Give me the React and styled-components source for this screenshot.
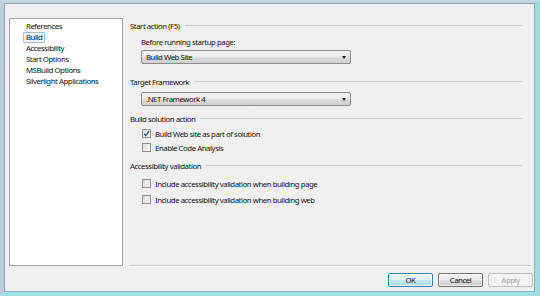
import React from 'react';
import styled, { createGlobalStyle } from 'styled-components';

const GlobalStyle = createGlobalStyle`
  html, body {
    margin: 0;
    padding: 0;
    background: #f0f0f0;
  }
  body {
    font-family: "Noto Sans", "Liberation Sans", sans-serif;
    font-size: 7.8px;
    letter-spacing: -0.45px;
    color: #141414;
  }
`;

const Window = styled.div`
  box-sizing: border-box;
  width: 540px;
  height: 296px;
  display: flex;
  flex-direction: column;
  padding: 15px 5px 5px 5px;
  background: #f0f0f0;
  border-top: 3px solid #c6d6e0;
  border-left: 4px solid #bccfdb;
  border-right: 5px solid #9ddcdd;
  border-bottom: 4px solid #9fe1e2;
  box-shadow: inset 1px 1px 0 #8fa3b0, inset -1px -1px 0 #7fb9bd;
`;

const Body = styled.div`
  display: flex;
  height: 248px;
`;

const PageList = styled.ul`
  box-sizing: border-box;
  width: 114px;
  margin: 0;
  padding: 2px 0 0 0;
  list-style: none;
  background: #fff;
  border: 1px solid #a0a4aa;
`;

const PageItem = styled.li`
  height: 11px;
  line-height: 11px;
  padding-left: 15px;
  span {
    display: inline-block;
    padding: 0 2px;
    margin-left: -2px;
    line-height: 9px;
    border: 1px solid ${p => (p.$selected ? '#a9bbd1' : 'transparent')};
    background: ${p => (p.$selected ? '#edf2f8' : 'transparent')};
    border-radius: 1px;
  }
`;

const RightPane = styled.div`
  flex: 1;
  display: flex;
  flex-direction: column;
  margin-left: 6px;
`;

const Content = styled.div`
  flex: 1;
  display: flex;
  flex-direction: column;
  padding: 2px 8px 0 1px;
`;

const Separator = styled.div`
  height: 1px;
  background: #c4c4c4;
  box-shadow: 0 1px 0 #fff;
`;

const Heading = styled.div`
  display: flex;
  align-items: center;
  height: 11px;
  margin-top: ${p => p.$top || 0}px;
  white-space: nowrap;
  &::after {
    content: '';
    flex: 1;
    height: 1px;
    margin-left: 5px;
    background: #c9c9c9;
  }
`;

const Label = styled.div`
  height: 11px;
  line-height: 11px;
  margin: ${p => p.$top || 0}px 0 0 11px;
`;

const Select = styled.div`
  box-sizing: border-box;
  width: 210px;
  height: 14px;
  margin: ${p => p.$top || 0}px 0 0 11px;
  display: flex;
  align-items: center;
  justify-content: space-between;
  padding: 0 4px 0 4px;
  border: 1px solid #8b8b8b;
  border-radius: 2px;
  background: linear-gradient(#f3f3f3, #ebebeb 50%, #dedede 50%, #d0d0d0);
  &::after {
    content: '';
    border-left: 2.5px solid transparent;
    border-right: 2.5px solid transparent;
    border-top: 3px solid #111;
  }
`;

const CheckRow = styled.label`
  display: flex;
  align-items: center;
  height: 11px;
  margin: ${p => p.$top || 0}px 0 0 12px;
`;

const Box = styled.span`
  box-sizing: border-box;
  width: 9px;
  height: 9px;
  margin-right: 4px;
  border: 1px solid #8e8f8f;
  background: linear-gradient(135deg, #dcdcdc, #f6f6f6);
  display: flex;
  align-items: center;
  justify-content: center;
`;

const Footer = styled.div`
  display: flex;
  justify-content: flex-end;
  gap: 5px;
  margin: 7px -3px 0 0;
`;

const Button = styled.button`
  box-sizing: border-box;
  width: 45px;
  height: 14px;
  padding: 0;
  font: inherit;
  letter-spacing: inherit;
  border-radius: 2px;
  border: 1px solid ${p => (p.$primary ? '#3c7fb1' : p.disabled ? '#b9bcbe' : '#707070')};
  color: ${p => (p.disabled ? '#a3a3a3' : '#141414')};
  background: ${p =>
    p.$primary
      ? 'linear-gradient(#eaf6fc, #e0f1fa 50%, #c6e5f3 50%, #b5dbee)'
      : p.disabled
      ? '#f4f4f4'
      : 'linear-gradient(#f2f2f2, #ebebeb 50%, #dddddd 50%, #cfcfcf)'};
  box-shadow: ${p => (p.disabled ? 'none' : 'inset 0 0 0 1px rgba(255,255,255,0.7)')};
`;

const Check = () => (
  <svg width="7" height="7" viewBox="0 0 7 7">
    <path d="M1 3.6 L2.8 5.6 L6 1.2" fill="none" stroke="#3a4f6a" strokeWidth="1.3" />
  </svg>
);

const pages = ['References', 'Build', 'Accessibility', 'Start Options', 'MSBuild Options', 'Silverlight Applications'];

const Checkbox = ({ checked, top, children }) => (
  <CheckRow $top={top}>
    <Box>{checked && <Check />}</Box>
    {children}
  </CheckRow>
);

export default function App() {
  return (
    <>
      <GlobalStyle />
      <Window>
        <Body>
          <PageList>
            {pages.map(p => (
              <PageItem key={p} $selected={p === 'Build'}>
                <span>{p}</span>
              </PageItem>
            ))}
          </PageList>
          <RightPane>
            <Content>
              <Heading>Start action (F5)</Heading>
              <Label $top={6}>Before running startup page:</Label>
              <Select $top={2}>Build Web Site</Select>
              <Heading $top={12}>Target Framework</Heading>
              <Select $top={5}>.NET Framework 4</Select>
              <Heading $top={7}>Build solution action</Heading>
              <Checkbox checked top={4}>Build Web site as part of solution</Checkbox>
              <Checkbox top={3}>Enable Code Analysis</Checkbox>
              <Heading $top={7}>Accessibility validation</Heading>
              <Checkbox top={7}>Include accessibility validation when building page</Checkbox>
              <Checkbox top={5}>Include accessibility validation when building web</Checkbox>
            </Content>
            <Separator />
          </RightPane>
        </Body>
        <Footer>
          <Button $primary>OK</Button>
          <Button>Cancel</Button>
          <Button disabled>Apply</Button>
        </Footer>
      </Window>
    </>
  );
}
